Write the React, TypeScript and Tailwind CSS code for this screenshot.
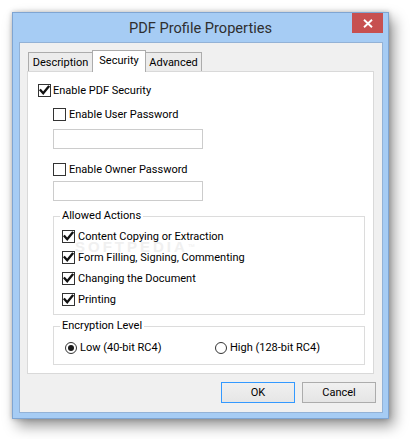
import React from "react";

const font = { fontFamily: 'Roboto, "Liberation Sans", Arial, sans-serif' };

function Box({ checked }: { checked: boolean }) {
  return (
    <span className="flex h-[13px] w-[13px] shrink-0 items-center justify-center border border-[#333333] bg-white">
      {checked && (
        <svg width="11" height="11" viewBox="0 0 11 11">
          <path d="M1.6 5.4 L4.2 8.2 L9.4 1.8" fill="none" stroke="#111" strokeWidth="2.3" strokeLinecap="square" strokeLinejoin="miter" />
        </svg>
      )}
    </span>
  );
}

function Check({ checked, label, gap = "gap-[3px]" }: { checked: boolean; label: string; gap?: string }) {
  return (
    <div className={`flex h-[13px] items-center ${gap}`}>
      <Box checked={checked} />
      <span className="leading-[13px] whitespace-nowrap">{label}</span>
    </div>
  );
}

function Radio({ checked, label }: { checked: boolean; label: string }) {
  return (
    <div className="flex h-[12px] items-center gap-[3px]">
      <span className="flex h-[12px] w-[12px] shrink-0 items-center justify-center rounded-full border border-[#333333] bg-white">
        {checked && <span className="h-[6px] w-[6px] rounded-full bg-[#1a1a1a]" />}
      </span>
      <span className="leading-[12px] whitespace-nowrap">{label}</span>
    </div>
  );
}

function Group({ title, children, className }: { title: string; children: React.ReactNode; className: string }) {
  return (
    <div className={`relative ml-[15px] w-[312px] border border-[#dcdcdc] ${className}`}>
      <span className="absolute -top-[8px] left-[6px] bg-white px-[2px] leading-[14px] whitespace-nowrap">{title}</span>
      {children}
    </div>
  );
}

export default function App() {
  return (
    <div className="min-h-[439px] w-[410px] bg-white pl-[12px] pt-[12px] text-[11px] text-black" style={font}>
      <div className="flex h-[407px] w-[377px] flex-col border border-[#7fa5d2] bg-[#a6ccf4] shadow-[0_0_5px_rgba(0,0,0,0.25),5px_7px_13px_rgba(0,0,0,0.4)]">
        {/* title bar */}
        <div className="grid h-[29px] shrink-0 grid-cols-[1fr_auto_1fr]">
          <div />
          <div className="pt-[6px] text-[14.6px] leading-[18px] text-[#2f2f2f]">PDF Profile Properties</div>
          <div className="flex justify-end pr-[5px]">
            <div className="flex h-[20px] w-[31px] items-center justify-center bg-[#c75050]">
              <svg width="10" height="9" viewBox="0 0 10 9">
                <path d="M1 0.8 L9 8.2 M9 0.8 L1 8.2" stroke="#fff" strokeWidth="1.9" />
              </svg>
            </div>
          </div>
        </div>

        {/* client */}
        <div className="ml-[6px] flex h-[371px] w-[364px] flex-col border border-[#93b2d6] bg-[#f0f0f0]">
          {/* tabs */}
          <div className="ml-[7px] mt-[7px] flex h-[21px] items-end">
            <div className="ml-[1px] flex h-[19px] w-[64px] items-center justify-center border-l border-t border-[#acacac] bg-[#ececec] pt-[1px] leading-[16px]">
              Description
            </div>
            <div className="relative z-10 -mb-px flex h-[22px] w-[54px] items-start justify-center border-l border-r border-t border-[#acacac] bg-white pt-[2px] leading-[16px]">
              Security
            </div>
            <div className="flex h-[19px] w-[56px] items-center justify-center border-r border-t border-[#acacac] bg-[#ececec] pt-[1px] leading-[16px]">
              Advanced
            </div>
          </div>

          {/* panel */}
          <div className="relative ml-[7px] h-[303px] w-[347px] border border-[#d9d9d9] bg-white pl-[10px] pt-[12px]">
            <span className="pointer-events-none absolute left-[47px] top-[168px] text-[15px] font-bold leading-[14px] tracking-[3px] text-[#f0f0f0]" style={{ fontFamily: '"Liberation Sans", Arial, sans-serif' }}>
              SOFTPEDIA<sup className="text-[7px] font-normal">™</sup>
            </span>
            <div className="relative flex flex-col">
              <Check checked label="Enable PDF Security" gap="gap-[2px]" />
              <div className="ml-[15px] mt-[11px]">
                <Check checked={false} label="Enable User Password" />
              </div>
              <div className="ml-[15px] mt-[8px] h-[20px] w-[150px] border border-[#cccccc] bg-white" />
              <div className="ml-[15px] mt-[14px]">
                <Check checked={false} label="Enable Owner Password" />
              </div>
              <div className="ml-[15px] mt-[5px] h-[20px] w-[150px] border border-[#cccccc] bg-white" />

              <Group title="Allowed Actions" className="mt-[15px] h-[99px] pl-[8px] pt-[13px]">
                <div className="flex flex-col gap-[8px]">
                  <Check checked label="Content Copying or Extraction" />
                  <Check checked label="Form Filling, Signing, Commenting" />
                  <Check checked label="Changing the Document" />
                  <Check checked label="Printing" />
                </div>
              </Group>

              <Group title="Encryption Level" className="mt-[11px] h-[39px] pl-[11px] pt-[15px]">
                <div className="flex">
                  <div className="w-[150px]">
                    <Radio checked label="Low (40-bit RC4)" />
                  </div>
                  <Radio checked={false} label="High (128-bit RC4)" />
                </div>
              </Group>
            </div>
          </div>

          {/* buttons */}
          <div className="mt-[8px] flex justify-end gap-[7px] pr-[6px]">
            <button className="h-[21px] w-[74px] border border-[#3399ff] bg-gradient-to-b from-[#f0f0f0] to-[#e6e6e6] leading-[19px]">
              OK
            </button>
            <button className="h-[21px] w-[74px] border border-[#acacac] bg-gradient-to-b from-[#f0f0f0] to-[#e5e5e5] leading-[19px]">
              Cancel
            </button>
          </div>
        </div>
      </div>
    </div>
  );
}
